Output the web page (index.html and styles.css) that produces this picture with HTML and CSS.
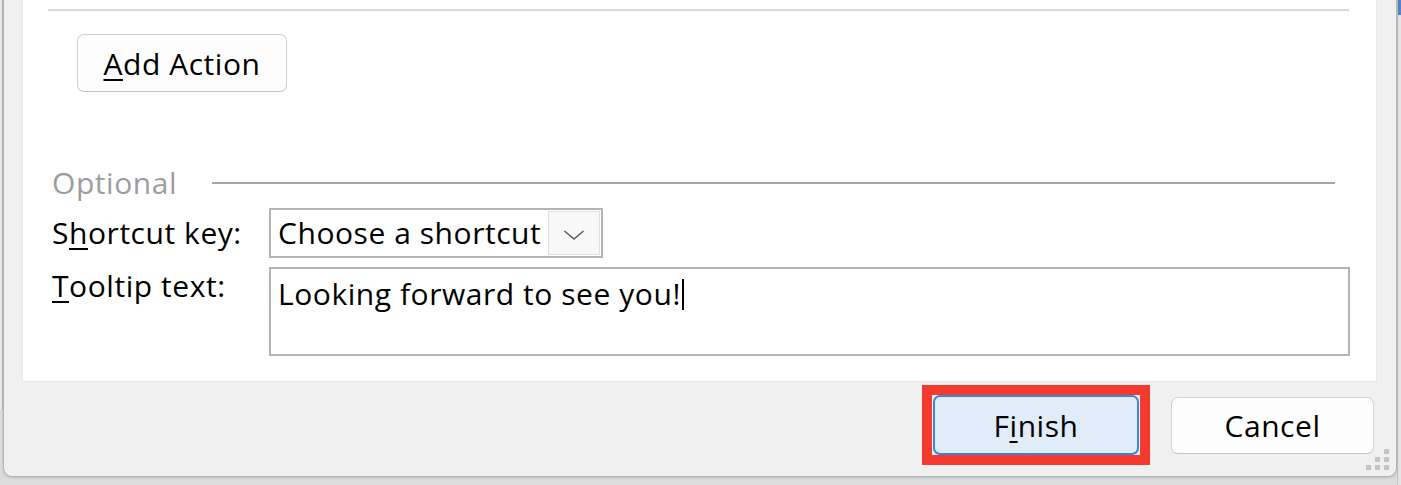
FILE: index.html
```html
<!DOCTYPE html>
<html>
<head>
<meta charset="utf-8">
<link rel="stylesheet" href="styles.css">
</head>
<body>
<div class="page">
  <div class="edge-left"></div>
  <div class="dialog">
    <div class="panel">
      <div class="top-rule"></div>
      <button class="btn add-btn"><u>A</u>dd Action</button>
      <div class="optional-row">
        <span class="optional-label">Optional</span>
        <span class="optional-rule"></span>
      </div>
      <div class="field-row shortcut-row">
        <label class="field-label">S<u>h</u>ortcut key:</label>
        <div class="combo">
          <span class="combo-text">Choose a shortcut</span>
          <span class="combo-btn">
            <svg width="22" height="12" viewBox="0 0 22 12"><path d="M1.5 2 L11 10 L20.5 2" fill="none" stroke="#5c5c5c" stroke-width="1.6"/></svg>
          </span>
        </div>
      </div>
      <div class="field-row tooltip-row">
        <label class="field-label"><u>T</u>ooltip text:</label>
        <div class="textbox">Looking forward to see you!<span class="caret"></span></div>
      </div>
    </div>
    <div class="footer">
      <span class="highlight"><button class="btn finish-btn">F<u>i</u>nish</button></span>
      <button class="btn cancel-btn">Cancel</button>
    </div>
    <div class="grip">
      <span class="dot d1"></span>
      <span class="dot d2"></span><span class="dot d3"></span>
      <span class="dot d4"></span><span class="dot d5"></span><span class="dot d6"></span>
    </div>
  </div>
  <div class="edge-right"><div class="edge-blue"></div></div>
</div>
</body>
</html>
```
FILE: styles.css
```css
* { box-sizing: border-box; }
html, body { margin: 0; padding: 0; }
body {
  background: #dcdcdc;
  font-family: "Open Sans", "Noto Sans", sans-serif;
  font-size: 30px;
  letter-spacing: 0.55px;
  color: #000;
  width: 1401px;
  height: 485px;
  overflow: hidden;
}
u {
  text-decoration-thickness: 2px;
  text-underline-offset: 4px;
}
.page {
  display: flex;
  align-items: flex-start;
  height: 485px;
}
.edge-left {
  width: 3px;
  height: 410px;
  background: #e9e9e9;
  border-right: 1px solid #b9b9b9;
}
.edge-right {
  flex: 1;
  height: 485px;
  background: #e4e4e4;
  border-left: 1px solid #c4c4c4;
}
.edge-blue {
  height: 15px;
  background: #4a86c8;
}
.dialog {
  position: relative;
  width: 1394px;
  height: 477px;
  background: #f0f0f0;
  border: 1px solid #b4b4b4;
  border-top: none;
  border-radius: 0 0 9px 9px;
  display: flex;
  flex-direction: column;
  box-shadow: 0 1px 3px rgba(0,0,0,0.15);
}
.panel {
  margin-left: 18px;
  width: 1355px;
  height: 382px;
  background: #fff;
  border: 1px solid #e8e8e8;
  border-top: none;
  display: flex;
  flex-direction: column;
  align-items: flex-start;
}
.top-rule {
  margin: 9px 0 0 25px;
  width: 1301px;
  height: 2px;
  background: #d9d9d9;
}
.btn {
  font-family: inherit;
  font-size: 30px;
  letter-spacing: 0.55px;
  color: #000;
  padding: 0;
  border-radius: 7px;
  cursor: default;
}
.add-btn {
  margin: 23px 0 0 54px;
  width: 210px;
  height: 58px;
  background: #fdfdfd;
  border: 1px solid #d0d0d0;
  border-bottom-color: #c4c4c4;
}
.optional-row {
  margin: 73px 0 0 29px;
  width: 1283px;
  height: 36px;
  display: flex;
  align-items: center;
}
.optional-label {
  color: #9d9d9d;
  line-height: 36px;
}
.optional-rule {
  flex: 1;
  margin-left: 35px;
  height: 2px;
  background: #a6a6a6;
}
.field-row {
  display: flex;
  margin-left: 29px;
}
.field-label {
  width: 217px;
  line-height: 36px;
  white-space: nowrap;
}
.shortcut-row {
  margin-top: 7px;
  align-items: center;
}
.combo {
  width: 334px;
  height: 50px;
  border: 2px solid #b4b4b4;
  display: flex;
  align-items: center;
  padding-left: 7px;
}
.combo-text {
  flex: 1;
  line-height: 36px;
  white-space: nowrap;
}
.combo-btn {
  width: 52px;
  height: 44px;
  margin-right: 1px;
  background: #f8f8f8;
  border: 1px solid #dedede;
  display: flex;
  align-items: center;
  justify-content: center;
  padding-top: 4px;
}
.tooltip-row {
  margin-top: 9px;
  align-items: flex-start;
}
.tooltip-row .field-label {
  margin-top: 1px;
}
.textbox {
  width: 1081px;
  height: 89px;
  border: 2px solid #b4b4b4;
  padding: 7px 0 0 7px;
  line-height: 36px;
  display: flex;
  align-items: flex-start;
  white-space: nowrap;
}
.caret {
  display: inline-block;
  width: 2px;
  height: 31px;
  margin-top: 3px;
  margin-left: 1px;
  background: #000;
}
.footer {
  flex: 1;
  display: flex;
  justify-content: flex-end;
  align-items: center;
  padding: 0 22px 8px 0;
  gap: 21px;
}
.highlight {
  display: flex;
  border: 10px solid #f4392f;
  padding: 0 1px;
}
.finish-btn {
  width: 206px;
  height: 60px;
  background: #e0ecf8;
  border: 2px solid #3886d6;
}
.cancel-btn {
  width: 203px;
  height: 57px;
  background: #fdfdfd;
  border: 1px solid #d4d4d4;
  border-bottom-color: #c6c6c6;
}
.grip {
  position: absolute;
  right: 5px;
  bottom: 3px;
  width: 24px;
  height: 24px;
}
.dot {
  position: absolute;
  width: 5px;
  height: 5px;
  background: #c4c4c4;
}
.d1 { right: 2px; top: 0; }
.d2 { right: 11px; top: 8px; }
.d3 { right: 2px; top: 8px; }
.d4 { right: 20px; top: 16px; }
.d5 { right: 11px; top: 16px; }
.d6 { right: 2px; top: 16px; }
```
